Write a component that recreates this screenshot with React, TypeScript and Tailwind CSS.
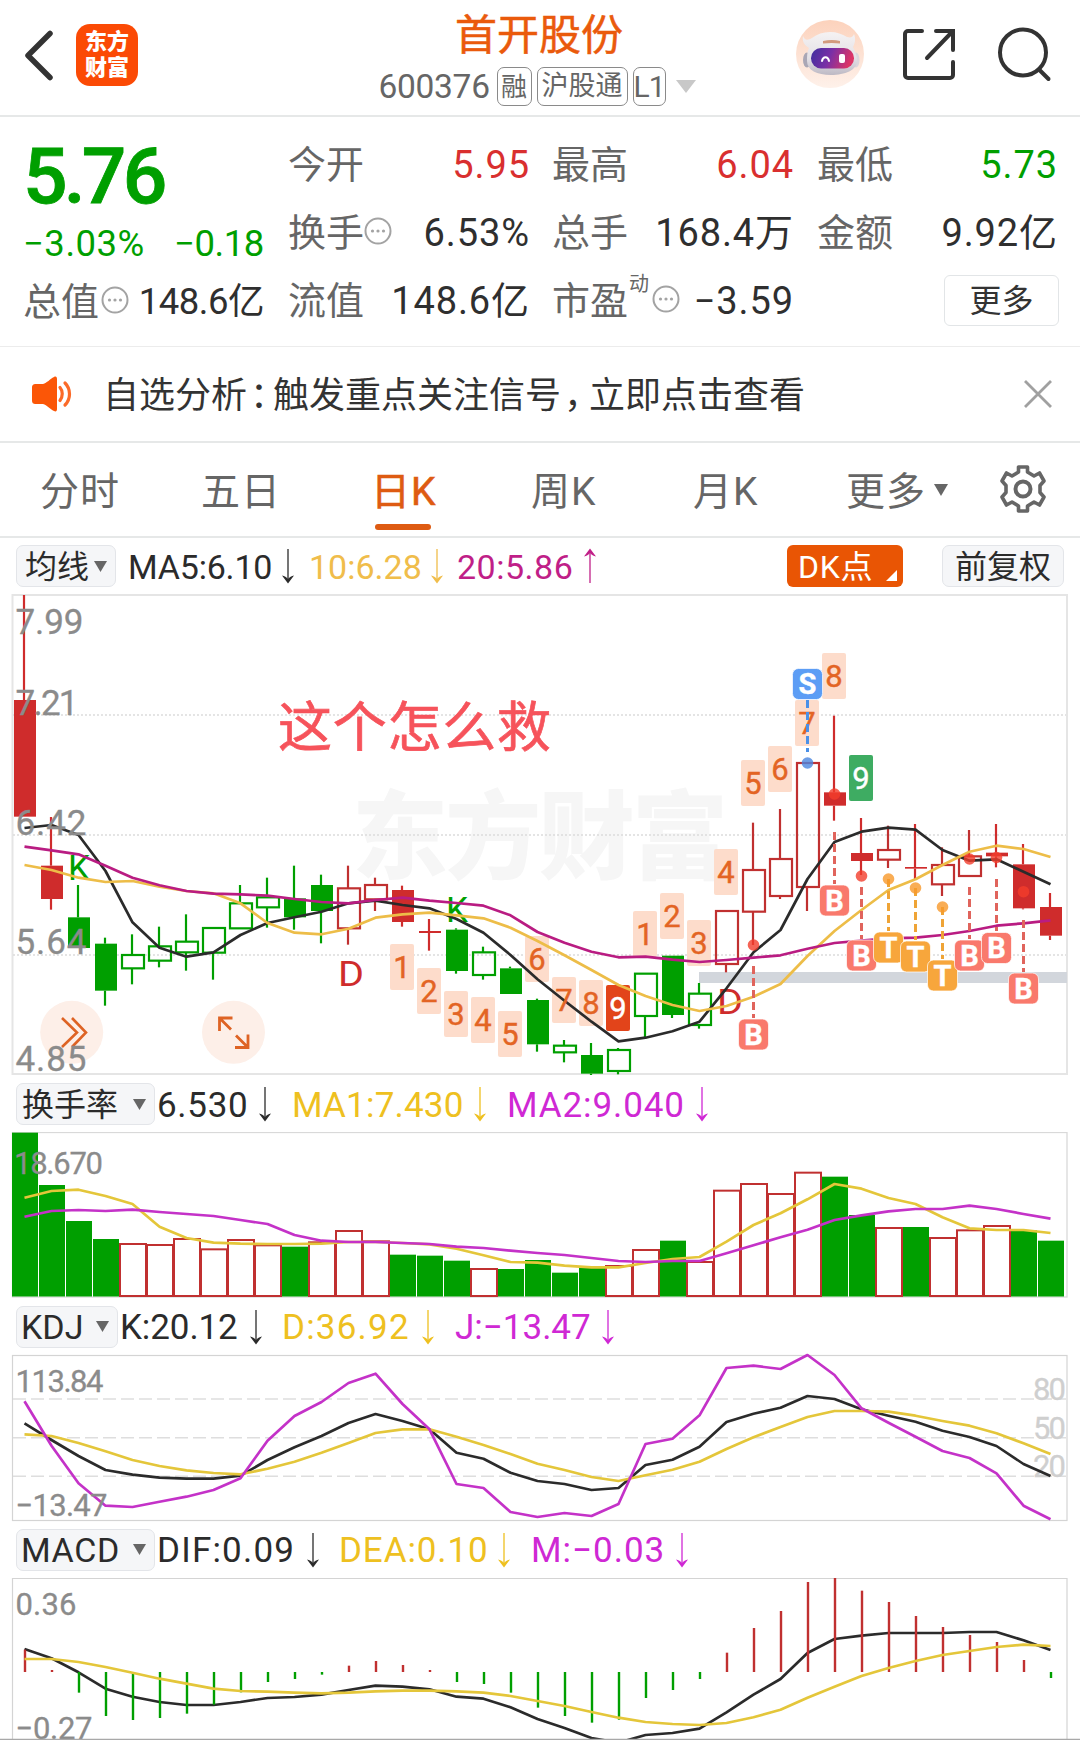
import type { ReactNode } from "react";

const BLACK = "#2b2b2b";
const GREEN = "#009f00";
const RED = "#cf2c2c";
const OUTLINE_RED = "#c03030";
const GOLD = "#edbd48";
const MAGENTA = "#b91c82";
const PURPLE = "#c432c8";

const COLUMN_STEP = 27;
const colX = (i: number) => 24 + COLUMN_STEP * i;

/** Sample series are stored in thirds of a pixel, measured from the given origin. */
const points = (values: number[], origin: number) =>
  values.map((v, i) => `${colX(i) + 0.5},${(origin + v / 3).toFixed(1)}`).join(" ");

function Series({ values, origin, color, width = 2.7 }: { values: number[]; origin: number; color: string; width?: number }) {
  return <polyline points={points(values, origin)} fill="none" stroke={color} strokeWidth={width} strokeLinejoin="round" />;
}

/* ---------- main chart data ---------- */

type Kind = "r" | "R" | "g" | "G";
// Upper case: solid body, lower case: hollow body. [kind, high, top, bottom, low]
const candles: [Kind, number, number, number, number][] = [
  ["R", 45, 360, 710, 710], ["R", 711, 857, 957, 989], ["G", 915, 1012, 1104, 1104], ["G", 1073, 1091, 1232, 1277],
  ["g", 1063, 1125, 1165, 1213], ["g", 1040, 1099, 1142, 1162], ["g", 1003, 1085, 1117, 1172], ["g", 1042, 1044, 1118, 1199],
  ["g", 915, 970, 1045, 1045], ["g", 893, 952, 982, 1043], ["G", 857, 955, 1012, 1049], ["G", 884, 915, 993, 1090],
  ["r", 857, 925, 1045, 1094], ["r", 893, 915, 958, 993], ["R", 917, 930, 1026, 1040], ["R", 1017, 1053, 1059, 1112],
  ["G", 1045, 1049, 1173, 1181], ["g", 1100, 1117, 1185, 1199], ["G", 1160, 1165, 1242, 1242], ["G", 1256, 1260, 1393, 1415],
  ["g", 1380, 1397, 1417, 1447], ["G", 1389, 1425, 1481, 1485], ["g", 1404, 1410, 1473, 1483], ["g", 1180, 1181, 1308, 1377],
  ["G", 1127, 1127, 1305, 1314], ["g", 1209, 1241, 1335, 1346], ["r", 993, 993, 1152, 1177], ["r", 728, 870, 995, 1095],
  ["r", 687, 837, 948, 957], ["r", 549, 549, 921, 993], ["R", 407, 637, 677, 722], ["R", 714, 819, 843, 885],
  ["r", 737, 810, 839, 864], ["R", 732, 861, 866, 898], ["r", 802, 855, 913, 948], ["r", 750, 829, 888, 888],
  ["R", 732, 818, 829, 862], ["R", 792, 853, 985, 988], ["R", 939, 981, 1067, 1080],
];

const ma5 = [744, 735, 765, 873, 1027, 1103, 1130, 1117, 1065, 1029, 1012, 995, 970, 962, 975, 985, 1017, 1058, 1125, 1198, 1262, 1325, 1384, 1373, 1354, 1325, 1225, 1117, 1050, 897, 786, 755, 743, 749, 810, 842, 838, 875, 913];
const ma10 = [855, 870, 893, 906, 903, 920, 933, 940, 970, 1029, 1058, 1063, 1046, 1013, 1003, 998, 1006, 1015, 1043, 1083, 1126, 1170, 1215, 1248, 1275, 1293, 1278, 1250, 1212, 1128, 1053, 990, 930, 898, 855, 815, 797, 807, 831];
const ma20 = [800, 811, 823, 857, 893, 916, 933, 941, 943, 947, 957, 966, 970, 960, 953, 962, 969, 977, 1006, 1056, 1088, 1115, 1132, 1130, 1139, 1146, 1140, 1133, 1126, 1106, 1089, 1082, 1075, 1073, 1065, 1053, 1037, 1030, 1021];

// [column, digit, top, variant]
const counts: [number, string, number, "soft" | "red" | "green"][] = [
  [14, "1", 944, "soft"], [15, "2", 968, "soft"], [16, "3", 991, "soft"], [17, "4", 997, "soft"], [18, "5", 1011, "soft"],
  [19, "6", 936, "soft"], [20, "7", 977, "soft"], [21, "8", 980, "soft"], [22, "9", 985, "red"], [23, "1", 911, "soft"],
  [24, "2", 893, "soft"], [25, "3", 920, "soft"], [26, "4", 849, "soft"], [27, "5", 760, "soft"], [28, "6", 746, "soft"],
  [29, "7", 700, "soft"], [30, "8", 653, "soft"], [31, "9", 755, "green"],
];

// [column, letter, box top, dash from, dash to, dot y]
const signals: [number, "B" | "S" | "T", number, number, number, number][] = [
  [27, "B", 1019, 966, 1018, 945], [29, "S", 668.5, 700, 752, 763], [30, "B", 885, 832, 884, 794],
  [31, "B", 940, 887, 939, 876], [32, "T", 932, 879, 931, 879], [33, "T", 941, 888, 940, 888],
  [34, "T", 960, 907, 959, 907], [35, "B", 940, 887, 939, 859], [36, "B", 932.5, 879, 931, 857.5], [37, "B", 973, 920, 972, 891.7],
];
const signalColor = { B: "#f9796c", S: "#5c9df5", T: "#f7a63c" };
const dashColor = { B: "#e0645c", S: "#4a90e8", T: "#efa436" };
const dotColor = { B: "#f33d2c", S: "#4a86e0", T: "#f8982a" };

function AxisText({ x = 15.5, y, children, width, size = 35, color = "#8b8b8b" }: { x?: number; y: number; children: string; width: number; size?: number; color?: string }) {
  return (
    <text x={x} y={y} fontSize={size} fill={color} stroke={color} strokeWidth="0.3" textLength={width}>
      {children}
    </text>
  );
}

function CandleChart() {
  const at = (v: number) => 580 + v / 3;
  return (
    <svg className="block h-[482px] w-[1080px] overflow-visible" viewBox="0 594 1080 482">
      <text x="352" y="871" fontSize="96" fontWeight="800" fill="#f6f6f6" textLength="376">东方财富</text>
      <rect x="12.5" y="595" width="1054.5" height="479" fill="none" stroke="#e5e5e5" strokeWidth="2" />
      {[715, 835, 955].map((y) => (
        <line key={y} x1="13" x2="1066" y1={y} y2={y} stroke="#dcdcdc" strokeWidth="1.3" strokeDasharray="2 2" />
      ))}
      <rect x="699" y="972" width="368" height="11" fill="#d2d6dc" />

      {counts.map(([i, , top, kind]) => (
        <rect key={i} x={colX(i) - 12} y={top} width="24" height="46" rx="2" fill={kind === "soft" ? "#fddccb" : kind === "red" ? "#e2441a" : "#3eac62"} />
      ))}

      {candles.map(([kind, high, top, bottom, low], i) => {
        const red = kind.toLowerCase() === "r";
        const solid = kind === kind.toUpperCase();
        const color = red ? (solid ? RED : OUTLINE_RED) : GREEN;
        return (
          <g key={i}>
            <line x1={colX(i)} x2={colX(i)} y1={at(high)} y2={at(top)} stroke={color} strokeWidth="2.2" />
            <line x1={colX(i)} x2={colX(i)} y1={at(bottom)} y2={at(low)} stroke={color} strokeWidth="2.2" />
            {solid ? (
              <rect x={colX(i) - 10} y={at(top)} width="22" height={(bottom - top) / 3} fill={color} />
            ) : (
              <rect x={colX(i) - 10} y={at(top)} width="22" height={(bottom - top) / 3} fill="none" stroke={color} strokeWidth="2.2" />
            )}
          </g>
        );
      })}

      <text x="68" y="880" fontSize="35" fill={GREEN}>K</text>
      <text x="446" y="922" fontSize="35" fill={GREEN}>K</text>
      <text x="338" y="986" fontSize="35" fill={RED} textLength="26" lengthAdjust="spacingAndGlyphs">D</text>
      <text x="717" y="1014" fontSize="35" fill={RED} textLength="26" lengthAdjust="spacingAndGlyphs">D</text>

      <Series values={ma5} origin={580} color={BLACK} />
      <Series values={ma10} origin={580} color={GOLD} />
      <Series values={ma20} origin={580} color={MAGENTA} />

      {counts.map(([i, digit, top, kind]) => (
        <text key={i} x={colX(i)} y={top + 34} fontSize="31" textAnchor="middle" fill={kind === "soft" ? "#e36424" : "#ffffff"} stroke={kind === "soft" ? "#e36424" : "#ffffff"} strokeWidth="0.4">
          {digit}
        </text>
      ))}

      {signals.map(([i, letter, top, from, to, dot]) => (
        <g key={i}>
          <line x1={colX(i) + 0.5} x2={colX(i) + 0.5} y1={from} y2={to} stroke={dashColor[letter]} strokeWidth="3" strokeDasharray="8 4" />
          <circle cx={colX(i) + 0.5} cy={dot} r="5.8" fill={dotColor[letter]} fillOpacity="0.8" />
          <rect x={colX(i) - 14.5} y={top} width="30" height="31" rx="6" fill={signalColor[letter]} stroke="#fff" strokeOpacity="0.7" />
          <text x={colX(i) + 0.5} y={top + 25.5} fontSize="29" fontWeight="700" textAnchor="middle" fill="#fff" stroke="#fff" strokeWidth="0.4">
            {letter}
          </text>
        </g>
      ))}

      <circle cx="71.7" cy="1032.3" r="31.5" fill="#fdefe8" />
      <path d="M62 1018l15 14.500-15 14.500M72 1018l14 14.500-14 14.500" fill="none" stroke="#de6324" strokeWidth="2.600" />
      <circle cx="233.500" cy="1032.300" r="31.500" fill="#fdefe8" />
      <path d="M231 1029.500l-11.500-11.500M219.500 1031v-13h13M236 1035.500l11.500 11.500M248 1034.500v13h-13" fill="none" stroke="#de6324" strokeWidth="2.800" />

      <AxisText y={634} width={68}>7.99</AxisText>
      <AxisText y={715} width={63}>7.21</AxisText>
      <AxisText y={835} width={71}>6.42</AxisText>
      <AxisText y={954} width={71}>5.64</AxisText>
      <AxisText y={1070.5} width={71}>4.85</AxisText>

      <text x="278" y="747" fontSize="54" fill="#f6535b" stroke="#f6535b" strokeWidth="0.7" textLength="273">这个怎么救</text>
    </svg>
  );
}

/* ---------- turnover chart ---------- */

const turnover: ["r" | "g", number][] = [
  ["g", 188], ["g", 345], ["g", 453], ["g", 507], ["r", 519], ["r", 522], ["r", 504], ["r", 535], ["r", 507], ["r", 523],
  ["g", 530], ["r", 514], ["r", 480], ["r", 511], ["g", 554], ["g", 557], ["g", 572], ["r", 594], ["g", 597], ["g", 570],
  ["g", 608], ["g", 594], ["r", 585], ["r", 537], ["g", 512], ["r", 573], ["r", 359], ["r", 339], ["r", 369], ["r", 305],
  ["g", 320], ["g", 435], ["r", 471], ["g", 471], ["r", 501], ["r", 478], ["r", 465], ["g", 481], ["g", 512],
];
const turnoverMa1 = [383, 363, 359, 378, 402, 470, 504, 518, 521, 522, 522, 521, 516, 516, 519, 523, 536, 556, 576, 578, 587, 592, 592, 579, 567, 561, 515, 465, 430, 388, 342, 356, 384, 402, 442, 475, 480, 480, 489];
const turnoverMa2 = [440, 423, 420, 423, 419, 426, 432, 438, 450, 462, 495, 512, 516, 516, 519, 522, 530, 534, 542, 549, 555, 564, 573, 576, 573, 573, 550, 526, 502, 479, 450, 436, 424, 417, 417, 407, 417, 432, 446];

function TurnoverChart() {
  return (
    <svg className="block h-[166px] w-[1080px]" viewBox="0 1132 1080 166">
      <rect x="12.5" y="1132.5" width="1054.500" height="164.500" fill="none" stroke="#d9d9d9" strokeWidth="1.300" />
      {turnover.map(([kind, v], i) => {
        const top = 1070 + v / 3;
        return kind === "g" ? (
          <rect key={i} x={12 + 27 * i} y={top} width="26" height={1296.5 - top} fill={GREEN} />
        ) : (
          <rect key={i} x={12 + 27 * i} y={top + 1} width="26" height={1295 - top} fill="none" stroke={OUTLINE_RED} strokeWidth="2" />
        );
      })}
      <Series values={turnoverMa1} origin={1070} color="#e4c63a" />
      <Series values={turnoverMa2} origin={1070} color={PURPLE} />
      <AxisText y={1174} x={14} width={89} size={31}>18.670</AxisText>
    </svg>
  );
}

/* ---------- KDJ chart ---------- */

const kLine = [250, 300, 348, 390, 404, 413, 416, 416, 407, 360, 322, 288, 249, 222, 243, 268, 338, 356, 398, 423, 432, 450, 444, 375, 359, 320, 246, 221, 203, 168, 177, 208, 227, 245, 272, 291, 318, 372, 408];
const dLine = [283, 288, 309, 334, 360, 378, 391, 399, 403, 386, 365, 338, 309, 279, 268, 268, 290, 315, 342, 371, 390, 411, 423, 406, 389, 365, 327, 292, 261, 231, 213, 213, 215, 227, 243, 257, 280, 310, 342];
const jLine = [184, 317, 430, 497, 501, 485, 470, 450, 415, 302, 228, 186, 129, 101, 192, 268, 432, 444, 516, 531, 519, 528, 492, 312, 296, 226, 84, 77, 87, 45, 105, 205, 248, 290, 333, 354, 400, 497, 538];

function KdjChart() {
  return (
    <svg className="block h-[166px] w-[1080px] overflow-visible" viewBox="0 1355 1080 166">
      <rect x="12.5" y="1355.5" width="1054.500" height="165" fill="none" stroke="#d4d4d4" strokeWidth="1.200" />
      {[1399, 1437.7, 1476.3].map((y) => (
        <line key={y} x1="13" x2="1066" y1={y} y2={y} stroke="#dedede" strokeWidth="1.500" strokeDasharray="13 5" />
      ))}
      <AxisText x={1033} y={1400} width={33} size={31} color="#cfcfcf">80</AxisText>
      <AxisText x={1033} y={1438.5} width={33} size={31} color="#cfcfcf">50</AxisText>
      <AxisText x={1033} y={1477} width={33} size={31} color="#cfcfcf">20</AxisText>
      <Series values={kLine} origin={1340} color={BLACK} />
      <Series values={dLine} origin={1340} color="#e4c63a" />
      <Series values={jLine} origin={1340} color={PURPLE} />
      <AxisText y={1392} width={88} size={31}>113.84</AxisText>
      <AxisText y={1516} width={92} size={31}>−13.47</AxisText>
    </svg>
  );
}

/* ---------- MACD chart ---------- */

const MACD_ZERO = 996;
const histogram = [929, 990, 1058, 1128, 1140, 1134, 1121, 1094, 1057, 1026, 1017, 1004, 977, 963, 975, 990, 1026, 1032, 1058, 1103, 1128, 1148, 1139, 1074, 1050, 1017, 938, 864, 813, 726, 714, 752, 786, 828, 861, 885, 906, 960, 1014];
const difLine = [927, 955, 997, 1046, 1070, 1086, 1095, 1095, 1086, 1074, 1071, 1064, 1050, 1037, 1040, 1048, 1070, 1076, 1102, 1137, 1164, 1194, 1208, 1185, 1179, 1166, 1117, 1064, 1017, 939, 897, 887, 879, 879, 879, 876, 876, 901, 930];
const deaLine = [957, 957, 966, 981, 998, 1016, 1031, 1046, 1053, 1055, 1058, 1060, 1058, 1054, 1052, 1052, 1054, 1058, 1068, 1083, 1098, 1116, 1133, 1146, 1152, 1155, 1149, 1132, 1109, 1073, 1040, 1008, 984, 963, 945, 933, 921, 914, 918];

function MacdChart() {
  return (
    <svg className="block h-[162px] w-[1080px]" viewBox="0 1578 1080 162">
      <path d="M12.500 1740V1578.500H1067V1740" fill="none" stroke="#d4d4d4" strokeWidth="1.200" />
      <Series values={difLine} origin={1340} color={BLACK} />
      {histogram.map((v, i) => (
        <line key={i} x1={colX(i) + 1} x2={colX(i) + 1} y1={1340 + MACD_ZERO / 3} y2={1340 + v / 3} stroke={v < MACD_ZERO ? OUTLINE_RED : GREEN} strokeWidth="2.400" />
      ))}
      <Series values={deaLine} origin={1340} color="#e4c63a" />
      <AxisText y={1615} width={61} size={31}>0.36</AxisText>
      <AxisText y={1739} width={77} size={31}>−0.27</AxisText>
      <line x1="0" x2="1080" y1="1739.300" y2="1739.300" stroke="#a8a8a8" strokeWidth="1.200" />
    </svg>
  );
}

/* ---------- small pieces ---------- */

function Arrow({ up = false }: { up?: boolean }) {
  return (
    <svg className={up ? "-mt-[2px] h-[36px] w-[14px] shrink-0 rotate-180" : "-mt-[2px] h-[36px] w-[14px] shrink-0"} viewBox="0 0 14 36">
      <path d="M7 1v32" stroke="currentColor" strokeWidth="1.300" />
      <path d="M1 27.500c2.500.5 4.500 1.800 6 3.500 1.500-1.700 3.500-3 6-3.500L7 35.500z" fill="currentColor" />
    </svg>
  );
}

function Caret({ className }: { className: string }) {
  return (
    <svg className={className} viewBox="0 0 14 12" preserveAspectRatio="none">
      <path d="M0 0h14L7 12z" fill="currentColor" />
    </svg>
  );
}

function Picker({ children, className }: { children: ReactNode; className: string }) {
  return (
    <div className={`flex h-[42px] shrink-0 items-center justify-between rounded-[7px] border border-[#e3e5e9] bg-[#f5f6f8] ${className}`}>
      <span className="whitespace-nowrap">{children}</span>
      <Caret className="h-[11px] w-[13px] text-[#666666]" />
    </div>
  );
}

function Metric({ children, className, up }: { children: ReactNode; className: string; up?: boolean }) {
  return (
    <div className={`flex shrink-0 items-center justify-between pt-[2px] whitespace-nowrap ${className}`}>
      <span>{children}</span>
      <Arrow up={up} />
    </div>
  );
}

function Info() {
  return (
    <svg className="-mt-[5px] size-[28px] shrink-0" viewBox="0 0 28 28">
      <circle cx="14" cy="14" r="12.500" fill="none" stroke="#a3a3a3" strokeWidth="2" />
      <circle cx="8.500" cy="14" r="1.600" fill="#a3a3a3" />
      <circle cx="14" cy="14" r="1.600" fill="#a3a3a3" />
      <circle cx="19.500" cy="14" r="1.600" fill="#a3a3a3" />
    </svg>
  );
}

function Stat({ label, value, tone = "text-[#2f2f2f]", extra }: { label: string; value: string; tone?: string; extra?: ReactNode }) {
  return (
    <div className="flex h-[68px] items-center justify-between pt-[2px] whitespace-nowrap">
      <span className="flex items-center text-[38px] text-[#666666]">
        {label}
        {extra}
      </span>
      <span className={`-mr-[1px] text-[38px] tracking-[0.9px] ${tone}`}>{value}</span>
    </div>
  );
}

function Robot() {
  return (
    <svg className="h-[68px] w-[68px]" viewBox="0 0 68 68">
      <defs>
        <linearGradient id="halo" x1="0" y1="0" x2="0" y2="1">
          <stop offset="0" stopColor="#fcd2bc" />
          <stop offset="1" stopColor="#fef1ea" />
        </linearGradient>
        <linearGradient id="visor" x1="0" y1="0" x2="1" y2="0.200">
          <stop offset="0" stopColor="#3e2f9e" />
          <stop offset="0.500" stopColor="#7a2fa6" />
          <stop offset="1" stopColor="#dc3566" />
        </linearGradient>
        <linearGradient id="shell" x1="0" y1="0" x2="0" y2="1">
          <stop offset="0" stopColor="#f5f2f3" />
          <stop offset="0.600" stopColor="#e4e1e6" />
          <stop offset="1" stopColor="#bdb9c4" />
        </linearGradient>
      </defs>
      <circle cx="34" cy="34" r="34" fill="url(#halo)" />
      <ellipse cx="11" cy="40" rx="4" ry="7.500" fill="#aaa7b5" />
      <ellipse cx="60" cy="40" rx="3.500" ry="7.500" fill="#dcd6dc" />
      <path d="M7 16c2 5 5 4 9 2 5-4 11-6 18-6s12 2 17 5c4 1 6 0 7-3 2 5 1 9-1 13 2 4 4 9 4 14 0 9-12 14-26 14S11 50 11 41c0-5 0-9 2-13-5-3-7-7-6-12z" fill="url(#shell)" />
      <path d="M27 21q9-2 17 0v2.500q-8-1-17 0z" fill="#d29a7d" />
      <rect x="15" y="28" width="43" height="20.500" rx="10" fill="url(#visor)" />
      <path d="M26 41c1-5 6-5 7 0" fill="none" stroke="#fff" strokeWidth="2" strokeLinecap="round" />
      <rect x="43" y="34" width="6" height="9" rx="2" fill="#fff" />
    </svg>
  );
}

function Header() {
  return (
    <header className="flex h-[117px] border-b-2 border-[#e6e8e8]">
      <svg className="mt-[29px] ml-[22px] h-[53px] w-[34px]" viewBox="0 0 34 53">
        <path d="M28 4.500L6 26.500l22 22" fill="none" stroke="#333" strokeWidth="5.500" strokeLinecap="round" strokeLinejoin="round" />
      </svg>
      <div className="mt-[24px] ml-[20px] flex h-[62px] w-[62px] flex-col items-center justify-center rounded-[14px] bg-[#fb4a05] text-[22px] leading-[26px] font-black text-white">
        <span>东方</span>
        <span>财富</span>
      </div>
      <div className="ml-[239px] flex w-[320px] flex-col items-center">
        <h1 className="mt-[10px] ml-[4px] text-[42px] leading-[52px] whitespace-nowrap text-[#ea5a0c] [-webkit-text-stroke:0.5px_#ea5a0c]">首开股份</h1>
        <div className="mt-[4px] flex h-[40px] items-center text-[27px] leading-none whitespace-nowrap text-[#666666]">
          <span className="w-[118px] pt-[2px] text-[33.500px] tracking-[-0.300px]">600376</span>
          <span className="flex h-[39px] w-[35px] items-center justify-center rounded-[7px] border-[1.500px] border-[#8a8a8a] pt-[1px] text-[26px]">融</span>
          <span className="ml-[5px] flex h-[39px] w-[91px] items-center justify-center rounded-[7px] border-[1.500px] border-[#8a8a8a] pt-[1px]">沪股通</span>
          <span className="ml-[5px] flex h-[39px] w-[33px] items-center justify-center rounded-[7px] border-[1.500px] border-[#8a8a8a] pt-[1px] text-[30px] tracking-[-1px]">L1</span>
          <Caret className="ml-[10px] h-[13px] w-[20px] text-[#c8c8c8]" />
        </div>
      </div>
      <div className="mt-[20px] ml-[99px]">
        <Robot />
      </div>
      <svg className="mt-[27px] ml-[37px] h-[56px] w-[56px]" viewBox="0 0 56 56" fill="none" stroke="#333" strokeWidth="4" strokeLinecap="round">
        <path d="M21 4H7a3 3 0 0 0-3 3v41a3 3 0 0 0 3 3h42a3 3 0 0 0 3-3V35M35 4h17v19M51 5L26 31" />
      </svg>
      <svg className="mt-[26px] ml-[39px] h-[58px] w-[58px]" viewBox="0 0 58 58" fill="none" stroke="#333" strokeWidth="4" strokeLinecap="round">
        <circle cx="27" cy="26.500" r="23" />
        <path d="M43 43.500l9.500 9.500" />
      </svg>
    </header>
  );
}

function Quote() {
  return (
    <section className="flex h-[230px] border-b border-[#ececec] pt-[13px] leading-none">
      <div className="ml-[23px] w-[241px]">
        <div className="flex h-[90px] items-center pt-[2px] text-[78.500px] font-medium tracking-[-3.800px] text-[#009f00] [-webkit-text-stroke:0.8px_#009f00]">5.76</div>
        <div className="flex h-[46px] items-center justify-between pt-[2px] text-[36.500px] tracking-[0.500px] whitespace-nowrap text-[#009f00]">
          <span>−3.03%</span>
          <span className="tracking-[-0.400px]">−0.18</span>
        </div>
        <div className="mt-[1px] flex h-[68px] items-center justify-between pt-[2px] text-[38px] whitespace-nowrap text-[#666666]">
          <span className="flex items-center gap-[2px]">总值<Info /></span>
          <span className="text-[36.500px] tracking-[-0.500px] text-[#2f2f2f]">148.6亿</span>
        </div>
      </div>
      <div className="ml-[24px] w-[241px]">
        <Stat label="今开" value="5.95" tone="text-[#d92f2f]" />
        <Stat label="换手" value="6.53%" extra={<Info />} />
        <Stat label="流值" value="148.6亿" />
      </div>
      <div className="ml-[23px] w-[241px]">
        <Stat label="最高" value="6.04" tone="text-[#d92f2f]" />
        <Stat label="总手" value="168.4万" />
        <Stat
          label="市盈"
          value="−3.59"
          extra={
            <>
              <span className="-mt-[34px] mr-[3px] ml-[1px] text-[20px]">动</span>
              <Info />
            </>
          }
        />
      </div>
      <div className="ml-[24px] w-[240px]">
        <Stat label="最低" value="5.73" tone="text-[#009f00]" />
        <Stat label="金额" value="9.92亿" />
        <div className="flex h-[68px] items-center justify-end">
          <button className="-mr-[2px] h-[51px] w-[115px] rounded-[6px] border-[1.500px] border-[#e2e5e7] pt-[2px] text-[32px] text-[#333333]">更多</button>
        </div>
      </div>
    </section>
  );
}

function Notice() {
  return (
    <section className="flex h-[96px] items-center border-b-2 border-[#e6e8e8] leading-none">
      <svg className="ml-[31px] h-[36px] w-[42px]" viewBox="0 0 42 36">
        <path d="M5 8h7c4-1 7-5 11-7 2-1 3 0 3 2v30c0 2-1 3-3 2-4-2-7-6-11-7H5c-3 0-4-1-4-4V12c0-3 1-4 4-4z" fill="#fb5607" />
        <path d="M29 11.500c3 3.500 3 9 0 13M34 7c6 6 6 16 0 22" fill="none" stroke="#fb6a28" strokeWidth="3.200" strokeLinecap="round" />
      </svg>
      <p className="ml-[30px] w-[722px] pt-[4px] text-[36px] whitespace-nowrap text-[#333333]">
        自选分析<span className="inline-block w-[26px] pl-[3px] [font-feature-settings:'halt']">：</span>触发重点关注信号
        <span className="inline-block w-[28px] pl-[3px] [font-feature-settings:'halt']">，</span>立即点击查看
      </p>
      <svg className="ml-[198px] h-[30px] w-[30px]" viewBox="0 0 30 30">
        <path d="M2 2l26 26M28 2L2 28" stroke="#a0a0a0" strokeWidth="2.800" />
      </svg>
    </section>
  );
}

function Gear() {
  return (
    <svg className="-mt-[2px] h-[50px] w-[48px]" viewBox="0 0 48 50" fill="none" stroke="#666666" strokeWidth="3.600">
      <path d="M19.500 3h9v5l6.500 4 5.500-3 4.500 8-4 4.500v7l4 4.500-4.500 8-5.500-3-6.500 4v5h-9v-5L13 38l-5.500 3L3 33l4-4.500v-7L3 17l4.500-8 5.500 3 6.500-4z" strokeLinejoin="round" />
      <circle cx="24" cy="25" r="7.500" strokeWidth="4" />
    </svg>
  );
}

function Tabs() {
  return (
    <nav className="flex h-[95px] items-center border-b-2 border-[#e6e8e8] text-[39px] leading-none tracking-[1px] whitespace-nowrap text-[#666666]">
      <span className="ml-[40px] w-[161px] pt-[5px]">分时</span>
      <span className="w-[170px] pt-[5px]">五日</span>
      <span className="relative w-[160px] pt-[5px] text-[#de5b12] [-webkit-text-stroke:0.6px_#de5b12]">
        日K
        <i className="absolute top-[56px] left-[4px] h-[6px] w-[56px] rounded-full bg-[#de5b12]" />
      </span>
      <span className="w-[162px] pt-[5px]">周K</span>
      <span className="w-[153px] pt-[5px]">月K</span>
      <span className="w-[88px] pt-[5px]">更多</span>
      <Caret className="h-[12px] w-[14px]" />
      <div className="ml-[51px]">
        <Gear />
      </div>
    </nav>
  );
}

export default function App() {
  return (
    <main className="h-[1740px] w-[1080px] overflow-hidden bg-white font-['Roboto','Noto_Sans_CJK_SC',sans-serif] text-[#2b2b2b]">
      <Header />
      <Quote />
      <Notice />
      <Tabs />

      <div className="flex h-[56px] items-center pl-[16px] text-[34px] leading-none">
        <Picker className="w-[100px] pt-[1px] pr-[8px] pl-[8px] text-[32px]">均线</Picker>
        <Metric className="ml-[12px] w-[167px] tracking-[-0.200px]">MA5:6.10</Metric>
        <Metric className="ml-[14px] w-[135px] text-[#f0bd4b]">10:6.28</Metric>
        <Metric className="ml-[13px] w-[140px] tracking-[0.500px] text-[#c01f88]" up>20:5.86</Metric>
        <div className="relative ml-[190px] flex h-[42px] w-[116px] items-center rounded-[6px] bg-[#e95504] pt-[2px] pl-[11px] text-[32px] tracking-[0.700px] whitespace-nowrap text-white">
          DK点
          <svg className="absolute right-[6px] bottom-[6px] size-[11px]" viewBox="0 0 11 11">
            <path d="M11 0v11H0z" fill="#fff" />
          </svg>
        </div>
        <div className="ml-[39px] flex h-[42px] w-[122px] items-center justify-center rounded-[7px] border border-[#e3e5e9] bg-[#f5f6f8] pt-[2px] text-[32px] whitespace-nowrap">前复权</div>
      </div>
      <CandleChart />

      <div className="flex h-[56px] items-center pl-[16px] text-[35px] leading-none">
        <Picker className="w-[139px] pt-[1px] pr-[8px] pl-[5px] text-[32px]">换手率</Picker>
        <Metric className="ml-[2px] w-[115px] tracking-[0.700px]">6.530</Metric>
        <Metric className="ml-[20px] w-[195px] tracking-[0.200px] text-[#eec020]">MA1:7.430</Metric>
        <Metric className="ml-[20px] w-[202px] tracking-[0.900px] text-[#cf28d4]">MA2:9.040</Metric>
      </div>
      <TurnoverChart />

      <div className="flex h-[57px] items-center pl-[16px] text-[35px] leading-none">
        <Picker className="w-[102px] pr-[8px] pl-[4px] text-[34px]">KDJ</Picker>
        <Metric className="ml-[2px] w-[143px] tracking-[-0.100px]">K:20.12</Metric>
        <Metric className="ml-[19px] w-[153px] tracking-[1.200px] text-[#eec020]">D:36.92</Metric>
        <Metric className="ml-[20px] w-[160px] text-[#cf28d4]">J:−13.47</Metric>
      </div>
      <KdjChart />

      <div className="flex h-[57px] items-center pl-[16px] text-[35px] leading-none">
        <Picker className="w-[139px] pr-[8px] pl-[4px] text-[34px] tracking-[0.600px]">MACD</Picker>
        <Metric className="ml-[2px] w-[163px] tracking-[1.200px]">DIF:0.09</Metric>
        <Metric className="ml-[19px] w-[172px] tracking-[0.900px] text-[#eec020]">DEA:0.10</Metric>
        <Metric className="ml-[20px] w-[158px] tracking-[1px] text-[#cf28d4]">M:−0.03</Metric>
      </div>
      <MacdChart />
    </main>
  );
}
